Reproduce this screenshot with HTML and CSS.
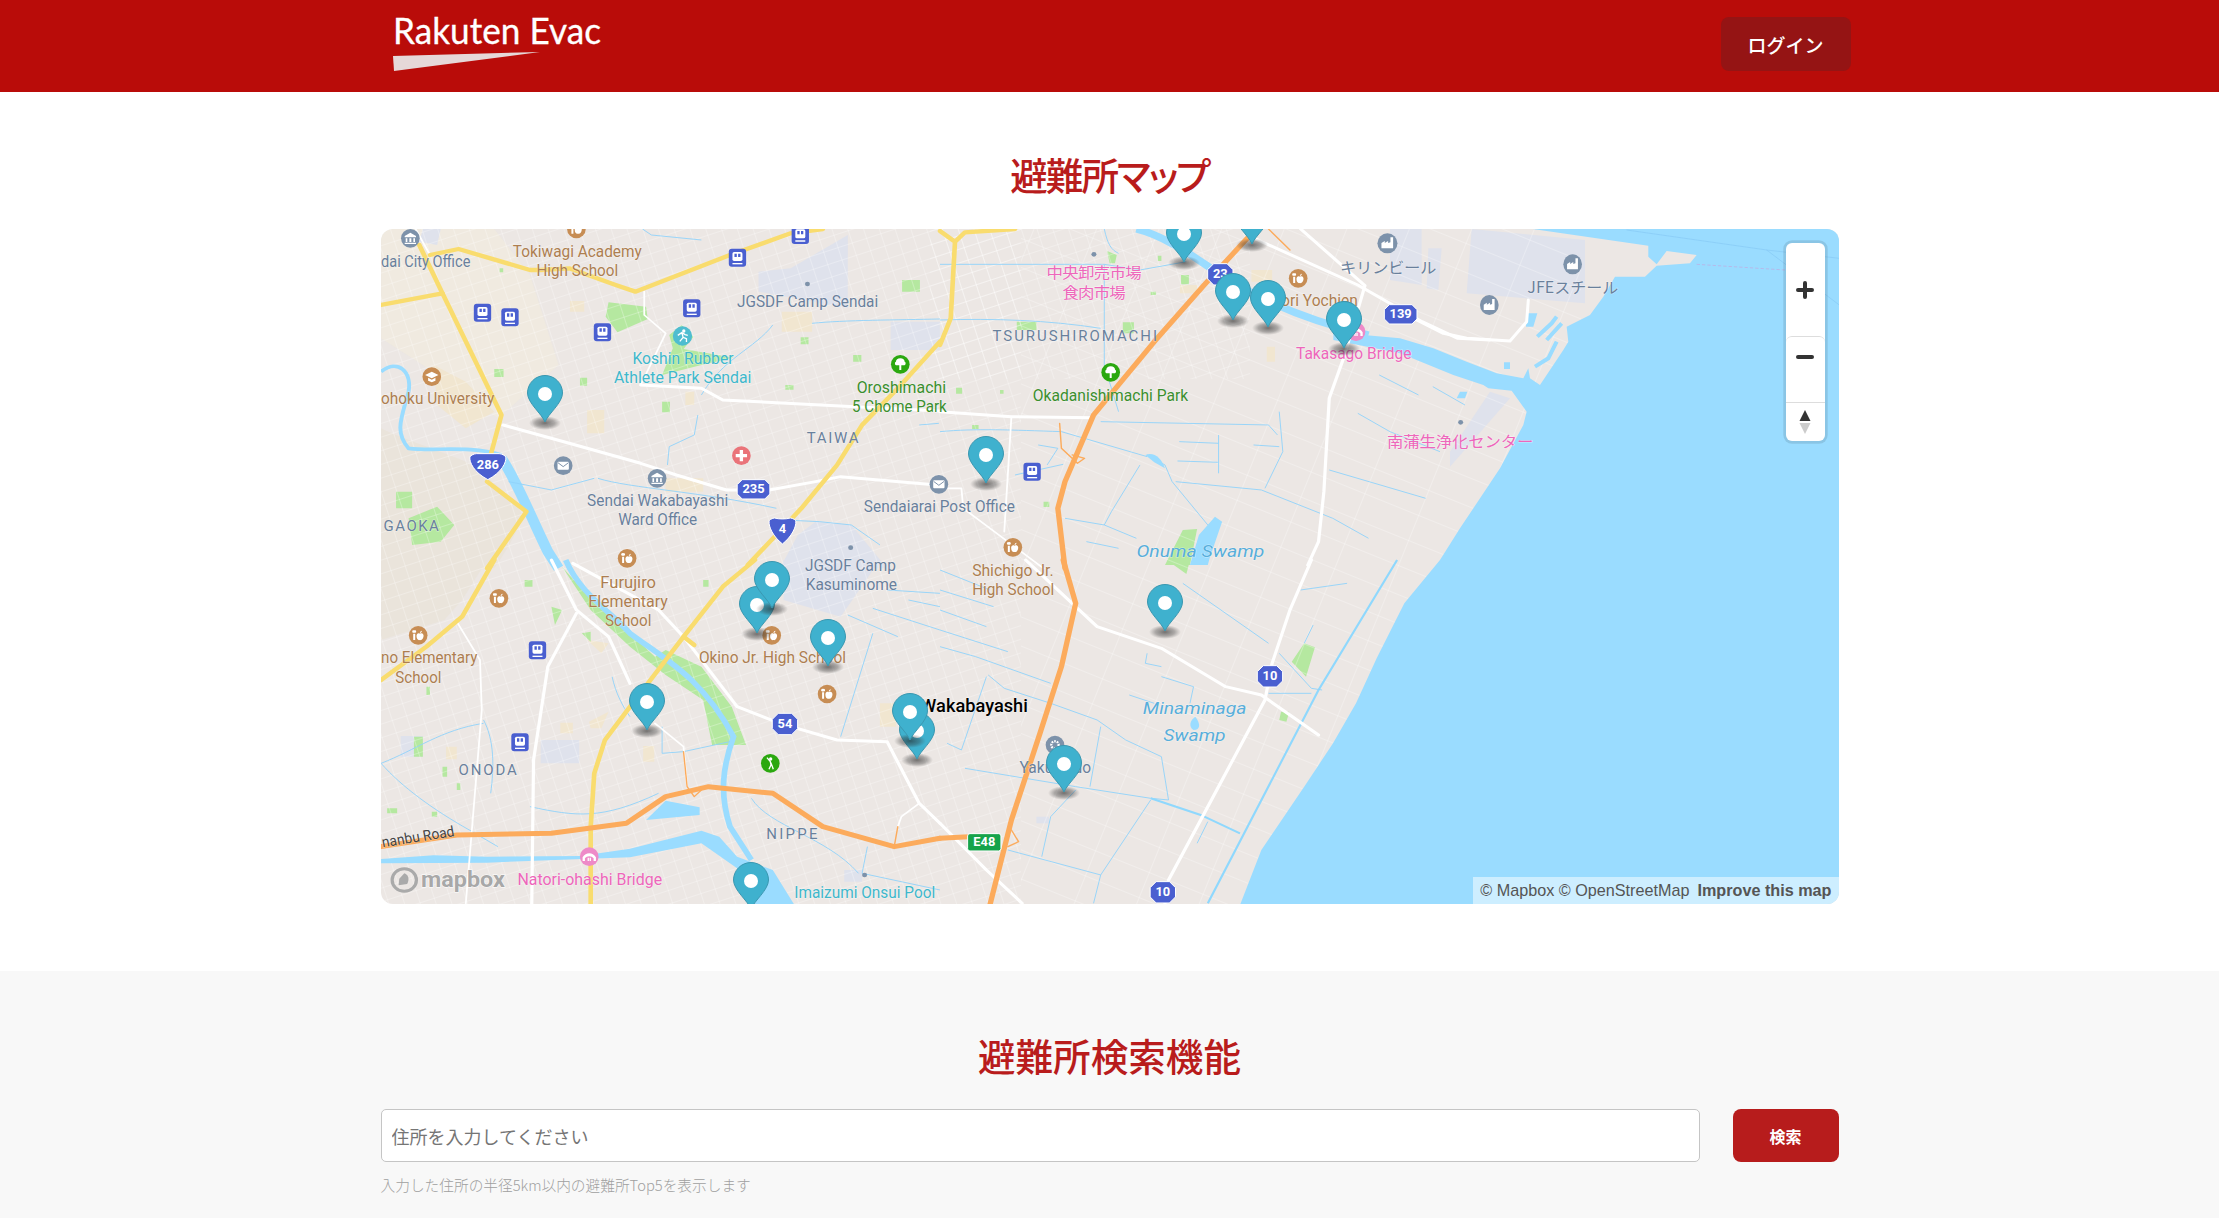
FILE: index.html
```html
<!DOCTYPE html>
<html lang="ja">
<head>
    <meta charset="UTF-8">
    <meta name="viewport" content="width=device-width, initial-scale=1.0">
    <title>Rakuten Evac</title>
    <link rel="stylesheet" href="styles.css">
</head>
<body>
    <header class="site-header">
        <div class="header-inner">
            <svg class="logo" viewBox="0 0 240 76" width="240" height="76">
                <text class="logo-text" x="0" y="36" textLength="208" lengthAdjust="spacingAndGlyphs">Rakuten Evac</text>
                <polygon class="logo-swoosh" points="0,48 147,44 1,63"/>
            </svg>
            <button class="login-btn">ログイン</button>
        </div>
    </header>

    <section class="map-section">
        <div class="container">
            <h2 class="section-title title-map">避難所マップ</h2>
            <div class="map-box">
                <svg class="map" viewBox="381 229 1458 675" width="1458" height="675">
                    <defs>
                        <pattern id="streets-dense" width="15" height="13" patternUnits="userSpaceOnUse" patternTransform="rotate(-18)">
                            <path d="M0 0H15M0 0V13" class="street-fine"/>
                        </pattern>
                        <pattern id="streets-wide" width="58" height="27" patternUnits="userSpaceOnUse" patternTransform="rotate(22)">
                            <path d="M0 0H58M0 0V27" class="street-fine"/>
                        </pattern>
                        <radialGradient id="pin-shadow">
                            <stop offset="0" stop-color="#222" stop-opacity=".6"/>
                            <stop offset=".6" stop-color="#333" stop-opacity=".35"/>
                            <stop offset="1" stop-color="#444" stop-opacity="0"/>
                        </radialGradient>

                        <!-- pin: tip is at 0,0 -->
                        <g id="pin">
                            <ellipse cx="0" cy="1" rx="16" ry="7" fill="url(#pin-shadow)"/>
                            <path d="M0 0C-3-8-17.5-19-17.5-29A17.5 17.5 0 0 1 17.5-29C17.5-19 3-8 0 0Z" class="pin-body"/>
                            <circle cx="0" cy="-28" r="7" fill="#fff"/>
                        </g>

                        <!-- poi icons, drawn around 0,0 and squeezed back to round -->
                        <g id="i-rail" transform="scale(.933 1)">
                            <rect x="-26" y="-27" width="52" height="54" rx="9" fill="#4a5fd0"/>
                            <rect x="-15" y="-17" width="30" height="27" rx="5" fill="#fff"/>
                            <path d="M-9-12H-2V-2H-9ZM2-12H9V-2H2Z" fill="#4a5fd0"/>
                            <path d="M-15 18H15" stroke="#fff" stroke-width="4"/>
                        </g>
                        <g id="i-museum" transform="scale(.933 1)">
                            <circle r="28" class="poi-slate"/>
                            <path d="M0-17L17-7V-3H-17V-7ZM-14 0H-9V11H-14ZM-3 0H3V11H-3ZM9 0H14V11H9ZM-17 13H17V17H-17Z" fill="#fff"/>
                        </g>
                        <g id="i-mail" transform="scale(.933 1)">
                            <circle r="28" class="poi-slate"/>
                            <rect x="-17" y="-12" width="34" height="24" rx="3" fill="#fff"/>
                            <path d="M-16-9L0 3L16-9" fill="none" stroke="#7d92aa" stroke-width="3"/>
                        </g>
                        <g id="i-factory" transform="scale(.933 1)">
                            <circle r="30" class="poi-slate"/>
                            <path d="M-18 15V-1L-8-7V-1L2-7V-1L9-3V-18H17V15Z" fill="#fff"/>
                        </g>
                        <g id="i-gear" transform="scale(.933 1)">
                            <circle r="28" class="poi-slate"/>
                            <circle r="11" fill="none" stroke="#fff" stroke-width="7" stroke-dasharray="5 3"/>
                        </g>
                        <g id="i-school" transform="scale(.933 1)">
                            <circle r="28" fill="#c78d54"/>
                            <path d="M0-15L20-5L0 5L-20-5ZM-11 3L0 9L11 3V12L0 17L-11 12Z" fill="#fff"/>
                        </g>
                        <g id="i-apple" transform="scale(.933 1)">
                            <circle r="28" fill="#c78d54"/>
                            <path d="M-15-5H-9V14H-15ZM-12-15A4 4 0 1 1-12-8A4 4 0 1 1-12-15Z" fill="#fff"/>
                            <path d="M5-5C12-9 17-4 16 3C15 11 10 16 5 14C0 16-5 11-5 3C-6-4 0-9 5-5ZM5-7C5-11 8-14 11-14C11-11 9-8 5-7Z" fill="#fff"/>
                        </g>
                        <g id="i-run" transform="scale(.933 1)">
                            <circle r="29" fill="#4fbdd0"/>
                            <circle cx="4" cy="-15" r="5" fill="#fff"/>
                            <path d="M-14-2L-2-10L8-4L16-2M-2-10L2 4L-8 16M2 4L12 8L12 18" fill="none" stroke="#fff" stroke-width="4"/>
                        </g>
                        <g id="i-tree" transform="scale(.933 1)">
                            <circle r="28" fill="#2ba80f"/>
                            <path d="M0-18C8-18 13-13 13-8C18-6 17 3 10 3H3V17H-3V3H-10C-17 3-18-6-13-8C-13-13-8-18 0-18Z" fill="#fff"/>
                        </g>
                        <g id="i-hospital" transform="scale(.933 1)">
                            <circle r="28" fill="#ea7379"/>
                            <path d="M-5-17H5V-5H17V5H5V17H-5V5H-17V-5H-5Z" fill="#fff"/>
                        </g>
                        <g id="i-bridge" transform="scale(.933 1)">
                            <circle r="28" fill="#ee8ac8"/>
                            <path d="M-20 2C-10-14 10-14 20 2V13H13V5C7-3-7-3-13 5V13H-20ZM-5 3H-1V13H-5ZM1 3H5V13H1Z" fill="#fff"/>
                        </g>
                        <g id="i-golf" transform="scale(.933 1)">
                            <circle r="28" fill="#2ba80f"/>
                            <circle cx="1" cy="-13" r="5" fill="#fff"/>
                            <path d="M-10-17L0-5L2 5L-4 18M0-5L4 4L9 18" fill="none" stroke="#fff" stroke-width="4"/>
                        </g>
                        <circle id="i-dot" r="7" fill="#7d92aa"/>

                        <!-- road shields -->
                        <path id="s-oct" transform="scale(.933 1)" d="M-20-32H20L38-14V14L20 32H-20L-38 14V-14Z" class="shield"/>
                        <path id="s-wide" transform="scale(.933 1)" d="M-34-29H34L49-14V14L34 29H-34L-49 14V-14Z" class="shield"/>
                        <path id="s-nat" transform="scale(.933 1)" d="M-34-36H34C42-36 52-30 54-26C56-10 42 20 0 42C-42 20-56-10-54-26C-52-30-42-36-34-36Z" class="shield"/>
                        <path id="s-nat-sm" transform="scale(.933 1)" d="M-24-36C-10-32 10-32 24-36C34-34 40-30 40-26C42-10 28 20 0 42C-28 20-42-10-40-26C-40-30-34-34-24-36Z" class="shield"/>
                    </defs>

                    <rect x="381" y="229" width="1458" height="675" class="land"/>

                    <!-- city tint, hills, camps, parks (z3 coords) -->
                    <g transform="translate(380 225) scale(.3571 .3333)">
                        <path d="M3 12H320L420 150L500 420L330 580L120 420L3 340Z" class="tint"/>
                        <path d="M3 610C60 640 150 670 240 710C320 770 390 830 400 880C370 950 340 1000 320 1030H3Z" class="hill"/>
                        <path d="M1060 140L1150 130L1310 30V250L1060 200Z" class="camp"/>
                        <path d="M1430 290H1568V375H1430Z" class="camp"/>
                        <path d="M1220 890L1320 900L1420 1030H1120L1170 930Z" class="camp"/>
                        <path d="M120 12L170 12L160 60L110 50Z" class="camp"/>
                        <path d="M150 420L240 470L320 560L240 610L160 540Z" class="sand"/>
                        <path d="M580 555H628V625H580ZM532 228H572V260H532ZM1125 260H1210V320H1125ZM800 760H905V800H800ZM855 500H880V540H855Z" class="sand"/>
                        <path d="M640 232L745 245L750 282L665 322L632 275Z" class="park"/>
                        <path d="M845 300L878 335L850 372L990 398L900 420L790 450L820 370L810 330Z" class="park"/>
                        <path d="M80 880L160 845L208 900L170 950L90 960Z" class="park"/>
                        <path d="M1462 165H1512V200H1462ZM320 432H346V456H320ZM560 458H580V482H560ZM790 530H812V562H790ZM1178 337H1200V358H1178ZM1325 390H1348V410H1325ZM1135 480H1158V494H1135ZM45 800H90V850H45ZM335 130H345V142H335Z" class="park"/>
                    </g>
                    <!-- z4 coords -->
                    <g transform="translate(940 225) scale(.3571 .3333)">
                        <path d="M872 135H930V170H872ZM915 365H938V410H915ZM672 180H720V205H672Z" class="sand"/>
                        <path d="M468 78L495 90L490 115L475 115ZM215 290H270V315H215ZM512 292H543V325H512ZM675 150H697V178H675ZM45 488H62V506H45ZM168 495H178V506H168ZM90 600H108V612H90ZM290 830H306V846H290ZM610 92H620V108H610ZM590 200H605V210H590Z" class="park"/>
                        <path d="M680 915L720 912L700 1020H630Z" class="park"/>
                    </g>
                    <!-- z5 coords -->
                    <g transform="translate(1400 225) scale(.3333)">
                        <path d="M215 12L555 45V235L200 205ZM-30 12H65V180L-30 165ZM85 70H125L115 195L80 190Z" class="camp"/>
                        <path d="M270 500L330 520L150 725L150 680Z" class="camp"/>
                    </g>
                    <!-- z6 coords -->
                    <g transform="translate(380 560) scale(.3571 .3333)">
                        <path d="M3 0H300L230 120L180 180L3 240Z" class="hill"/>
                        <path d="M1130 0H1400L1290 170L1130 120Z" class="camp"/>
                        <path d="M58 528H120V590H58ZM450 540H558V610H450ZM1300 930H1350V965H1300Z" class="camp"/>
                        <path d="M585 485L640 455L620 505H590ZM505 488H540V520H505ZM737 558H768V605H737ZM185 560H215V598H185ZM580 240L640 250L620 280ZM1400 430H1445V500H1400Z" class="sand"/>
                        <path d="M510 20L600 130L700 220L770 290L800 270L900 320L985 440L1025 555H930L905 420L800 345L700 260L590 150Z" class="park"/>
                        <path d="M95 530H120V590H95ZM480 140L510 150L490 195ZM405 60H427V80H405ZM565 220L590 215L590 245ZM175 620H188V650H175ZM130 380H140V405H130ZM20 745H48V760H20ZM215 670H225V690H215ZM145 755H160V770H145ZM905 60H920V80H905Z" class="park"/>
                    </g>
                    <!-- z7 coords -->
                    <g transform="translate(940 560) scale(.3571 .3333)">
                        <path d="M635 0H700L690 42Z" class="park"/>
                        <path d="M1020 250L1050 262L1025 350L985 305ZM955 455H978L970 485L950 480Z" class="park"/>
                        <path d="M270 770H305V790H270Z" class="camp"/>
                    </g>

                    <!-- small streets -->
                    <rect x="381" y="229" width="640" height="675" fill="url(#streets-dense)"/>
                    <rect x="1021" y="229" width="560" height="675" fill="url(#streets-wide)"/>
                    <rect x="930" y="229" width="320" height="150" fill="url(#streets-dense)"/>

                    <!-- sea and the river mouth (z5 coords) -->
                    <g transform="translate(1400 225) scale(.3333)">
                        <path d="M315 0L745 62V95L770 118L800 78L890 90L870 115L770 122L735 155L645 155L610 215L570 270L500 305L505 350L490 375L440 450L420 480L390 460L385 430L370 460L290 445L200 410L100 370L0 340L-200 322L-200 345L0 385L160 450L250 480L265 490L335 497L380 560L370 600L300 730L180 910L120 1005L13 1135L-70 1300L-132 1435L-201 1555L-287 1685L-416 1875L-480 2040H1340V0Z" class="water"/>
                        <path d="M412 335L455 295L470 275M440 345L485 295M470 350L445 400L405 425" class="lagoon"/>
                        <path d="M380 265H412L400 305H378ZM312 412H330V432H312ZM180 500H202L195 520H170Z" class="water"/>
                        <path d="M680 15L1100 75L1318 100M1100 75L1318 240" class="canal-sea"/>
                        <path d="M890 118L1155 135" class="ferry"/>
                    </g>

                    <!-- rivers, canals (z4) -->
                    <g transform="translate(940 225) scale(.3571 .3333)">
                        <path d="M550 12C620 30 690 80 745 120C850 200 1000 280 1200 330" class="river-lg"/>
                        <path d="M0 118H460L560 135L690 110" class="canal"/>
                        <path d="M460 12C470 60 480 75 500 85M460 118V420L500 560" class="canal"/>
                        <path d="M0 285C150 280 300 285 450 310M0 620C100 610 200 615 340 620L580 695M450 590L920 600L945 630" class="canal"/>
                        <path d="M670 650L780 655M665 708L778 712M878 660L950 665M780 630V745" class="canal"/>
                        <path d="M580 690L630 720L650 770L750 900M560 720L480 860L460 900M350 880L460 900L550 940M410 950L500 970M660 770L900 795L1100 880L1200 940" class="canal"/>
                        <path d="M950 560L960 680L910 790M1090 735L1360 820M1170 565L1260 620L1400 680M1230 450L1340 510M1380 485L1470 540" class="canal"/>
                        <path d="M275 660L330 670L300 720M210 750L345 718" class="canal"/>
                        <path d="M575 690C600 680 620 700 630 730L600 712Z" class="water"/>
                        <path d="M770 875L790 890L755 1000L750 1020H700L725 930Z" class="water"/>
                    </g>
                    <!-- z3 canals, river -->
                    <g transform="translate(380 225) scale(.3571 .3333)">
                        <path d="M3 440C50 400 90 440 80 500C60 580 40 620 80 670C150 680 250 660 340 690" class="river-sm"/>
                        <path d="M340 700C380 760 420 870 470 980L500 1030" class="river-md"/>
                        <path d="M1210 295C1300 285 1450 285 1568 282M890 570L880 630L810 665L805 720M610 760C700 790 900 800 1110 850M360 770L480 795L600 760M1130 885L1230 890L1320 900L1400 960M1565 595L1510 600" class="canal"/>
                        <path d="M735 12L760 30L900 45M1100 300C1050 370 960 400 900 510" class="canal"/>
                    </g>
                    <!-- z6 rivers -->
                    <g transform="translate(380 560) scale(.3571 .3333)">
                        <path d="M520 0C560 100 640 150 700 220C800 300 900 350 990 530C960 620 950 700 980 800L1040 900" class="river"/>
                        <path d="M3 897L150 886L300 890L560 888L700 866L900 812L950 830L1000 890L1100 930L1160 1034H1035L1000 925L900 850L700 892L300 908L3 910Z" class="water"/>
                        <path d="M745 780L800 722L895 742V765Z" class="water"/>
                        <path d="M3 610C60 680 150 750 250 810L330 860M650 350C660 400 680 440 700 470M790 500V580L850 575L980 545M290 480C320 540 320 620 310 700M3 610C100 570 170 510 290 490M420 740C550 770 620 780 780 700M1380 220L1290 530M1480 120L1568 140M1380 145L1568 210M1420 90L1568 100M1310 165L1450 230M1365 860L1350 940L1568 990M1040 715C1090 800 1250 830 1340 940" class="canal"/>
                    </g>
                    <!-- z7 canals -->
                    <g transform="translate(940 560) scale(.3571 .3333)">
                        <path d="M1280 0L1060 390L750 1030" class="canal-lg"/>
                        <path d="M680 70L920 250M950 280L1040 385L1070 390M920 400H1040M1045 195L1020 250M1140 70L1010 90" class="canal"/>
                        <path d="M0 30L140 90M0 90L150 140M0 150L130 200M0 210L190 275M0 260L100 290L310 370M135 345L180 385L310 430L440 480L520 540L620 590L640 720L590 715L380 680L70 625M20 550L60 570L130 350" class="canal"/>
                        <path d="M450 500L420 680M380 690L310 770L285 890M190 870L450 945L430 1030M590 720L450 945" class="canal"/>
                        <path d="M590 715L730 765L840 820" class="canal-lg"/>
                        <path d="M750 785L720 850M620 350L710 380L700 430M580 280L575 310L620 320M530 405L600 430" class="canal"/>
                        <path d="M715 470C730 490 730 510 710 510C695 500 700 480 715 470Z" class="water"/>
                    </g>

                    <!-- roads: white -->
                    <g transform="translate(380 225) scale(.3571 .3333)" class="road-w">
                        <path d="M345 600L530 655L730 715L830 750L970 795H1090L1220 770L1290 755L1560 780"/>
                        <path class="thin" d="M740 200V270L800 325L730 480"/>
                        <path d="M730 480L900 490L960 525L1330 545L1568 558"/>
                        <path class="thin" d="M100 12L140 90"/>
                    </g>
                    <g transform="translate(940 225) scale(.3571 .3333)" class="road-w">
                        <path d="M0 560L200 575L430 578"/>
                        <path class="thin" d="M200 575L180 920M0 790H60L65 850L290 1030"/>
                        <path d="M1010 12L1190 182L1130 400L1090 520L1075 800L1060 950L1030 1020"/>
                        <path d="M880 40L1170 180L1350 290L1450 340L1540 345"/>
                    </g>
                    <g transform="translate(1400 225) scale(.3333)" class="road-w">
                        <path d="M50 285L130 325L200 340L330 348L380 290L385 225"/>
                    </g>
                    <g transform="translate(940 560) scale(.3571 .3333)" class="road-w">
                        <path d="M1040 0L980 150L930 310L910 420L760 720L640 960L630 1030"/>
                        <path d="M240 0L440 200L620 265L800 380L900 405L1000 480L1060 525"/>
                        <path d="M0 790L130 930L230 1030"/>
                    </g>
                    <g transform="translate(380 560) scale(.3571 .3333)" class="road-w">
                        <path d="M1000 440L1120 490L1280 540L1420 545L1510 730L1568 790"/>
                        <path d="M480 0L550 150L640 230L700 370"/>
                        <path d="M550 160L470 320L430 600L425 1034"/>
                        <path class="thin" d="M215 185L280 300L285 450L240 1034"/>
                        <path d="M540 10L780 150L850 230L1000 440"/>
                        <path class="thin" d="M770 490L850 560L860 680"/>
                        <path class="thin" d="M1510 730L1460 770L1450 800"/>
                    </g>

                    <!-- roads: yellow -->
                    <g transform="translate(380 225) scale(.3571 .3333)" class="road-y">
                        <path d="M3 240L175 205L340 570L310 690"/>
                        <path d="M175 205L110 60M140 90L220 72L420 135H450L530 130L660 180L715 200L980 90L1150 25L1240 12"/>
                        <path d="M300 770L410 860L300 1030"/>
                        <path d="M1030 1020L1180 850L1280 720L1350 600L1450 490L1568 350"/>
                    </g>
                    <g transform="translate(940 225) scale(.3571 .3333)" class="road-y">
                        <path d="M0 360L30 280L42 50L0 18M42 50L70 22L210 12"/>
                    </g>
                    <g transform="translate(380 560) scale(.3571 .3333)" class="road-y">
                        <path d="M320 0L230 170L130 260L3 360"/>
                        <path d="M590 1034V800L600 640L630 540L700 440L850 230L960 80L1050 0"/>
                        <path d="M850 230L880 255"/>
                    </g>

                    <!-- roads: expressway -->
                    <g transform="translate(940 225) scale(.3571 .3333)" class="road-o">
                        <path d="M860 40L740 180L600 350L430 570L350 770L330 850L350 1030"/>
                    </g>
                    <g transform="translate(940 225) scale(.3571 .3333)" class="road-ot">
                        <path d="M335 595L340 670L385 715L405 700L370 690M920 12L980 75"/>
                    </g>
                    <g transform="translate(940 560) scale(.3571 .3333)" class="road-o">
                        <path d="M345 0L380 130L340 320L280 520L200 780L140 1034"/>
                        <path d="M0 835L80 830"/>
                    </g>
                    <g transform="translate(940 560) scale(.3571 .3333)" class="road-ot">
                        <path d="M200 810L220 845L190 860"/>
                    </g>
                    <g transform="translate(380 560) scale(.3571 .3333)" class="road-o">
                        <path d="M3 860L215 825L480 820L690 790L800 710L920 680L1100 700L1240 800L1440 860L1568 835"/>
                    </g>
                    <g transform="translate(380 560) scale(.3571 .3333)" class="road-ot">
                        <path d="M850 575L860 680L880 710L900 690M1450 800L1440 860"/>
                    </g>

                    <!-- pois, shields and labels: z3 -->
                    <g transform="translate(380 225) scale(.3571 .3333)">
                        <use href="#i-museum" x="85" y="40"/>
                        <use href="#i-museum" x="776" y="760"/>
                        <use href="#i-mail" x="513" y="722"/>
                        <use href="#i-mail" x="1565" y="778"/>
                        <use href="#i-school" x="145" y="455"/>
                        <use href="#i-apple" x="550" y="12"/>
                        <use href="#i-apple" x="692" y="1000"/>
                        <use href="#i-rail" x="287" y="263"/>
                        <use href="#i-rail" x="364" y="277"/>
                        <use href="#i-rail" x="623" y="322"/>
                        <use href="#i-rail" x="873" y="250"/>
                        <use href="#i-rail" x="1001" y="98"/>
                        <use href="#i-rail" x="1177" y="30"/>
                        <use href="#i-run" x="847" y="333"/>
                        <use href="#i-tree" x="1457" y="418"/>
                        <use href="#i-hospital" x="1012" y="692"/>
                        <use href="#i-dot" x="1197" y="177"/>
                        <use href="#i-dot" x="1318" y="968"/>

                        <use href="#s-nat" x="302" y="722"/>
                        <text class="shield-t" x="302" y="732">286</text>
                        <use href="#s-wide" x="1046" y="793"/>
                        <text class="shield-t" x="1046" y="805">235</text>
                        <use href="#s-nat-sm" x="1127" y="915"/>
                        <text class="shield-t" x="1127" y="925">4</text>

                        <text class="lbl slate" x="3" y="125" textLength="250" lengthAdjust="spacingAndGlyphs">dai City Office</text>
                        <text class="lbl brown" x="372" y="95" textLength="361" lengthAdjust="spacingAndGlyphs">Tokiwagi Academy</text>
                        <text class="lbl brown" x="438" y="153" textLength="229" lengthAdjust="spacingAndGlyphs">High School</text>
                        <text class="lbl slate" x="1000" y="245" textLength="395" lengthAdjust="spacingAndGlyphs">JGSDF Camp Sendai</text>
                        <text class="lbl teal" x="707" y="417" textLength="283" lengthAdjust="spacingAndGlyphs">Koshin Rubber</text>
                        <text class="lbl teal" x="655" y="475" textLength="385" lengthAdjust="spacingAndGlyphs">Athlete Park Sendai</text>
                        <text class="lbl green" x="1335" y="503" textLength="250" lengthAdjust="spacingAndGlyphs">Oroshimachi</text>
                        <text class="lbl green" x="1322" y="561" textLength="265" lengthAdjust="spacingAndGlyphs">5 Chome Park</text>
                        <text class="lbl brown" x="3" y="538" textLength="317" lengthAdjust="spacingAndGlyphs">ohoku University</text>
                        <text class="lbl slate spaced" x="1195" y="655" textLength="145">TAIWA</text>
                        <text class="lbl slate" x="580" y="843" textLength="395" lengthAdjust="spacingAndGlyphs">Sendai Wakabayashi</text>
                        <text class="lbl slate" x="667" y="901" textLength="221" lengthAdjust="spacingAndGlyphs">Ward Office</text>
                        <text class="lbl slate" x="1355" y="862" textLength="423" lengthAdjust="spacingAndGlyphs">Sendaiarai Post Office</text>
                        <text class="lbl slate spaced" x="10" y="917" textLength="155">GAOKA</text>
                    </g>

                    <!-- z4 -->
                    <g transform="translate(940 225) scale(.3571 .3333)">
                        <use href="#i-apple" x="1003" y="160"/>
                        <use href="#i-apple" x="204" y="967"/>
                        <use href="#i-factory" x="1253" y="55"/>
                        <use href="#i-rail" x="258" y="740"/>
                        <use href="#i-tree" x="478" y="442"/>
                        <use href="#i-bridge" x="1165" y="320"/>
                        <use href="#i-dot" x="431" y="88"/>
                        <use href="#i-dot" x="1458" y="592"/>
                        <use href="#s-oct" x="785" y="148"/>
                        <text class="shield-t" x="785" y="160">23</text>
                        <use href="#s-wide" x="1290" y="268"/>
                        <text class="shield-t" x="1290" y="280">139</text>

                        <text class="lbl pink cjk" x="298" y="158" textLength="267">中央卸売市場</text>
                        <text class="lbl pink cjk" x="343" y="218" textLength="177">食肉市場</text>
                        <text class="lbl slate spaced" x="147" y="347" textLength="461">TSURUSHIROMACHI</text>
                        <text class="lbl green" x="260" y="527" textLength="435" lengthAdjust="spacingAndGlyphs">Okadanishimachi Park</text>
                        <text class="lbl brown" x="955" y="243" textLength="215" lengthAdjust="spacingAndGlyphs">ori Yochien</text>
                        <text class="lbl pink" x="997" y="402" textLength="323" lengthAdjust="spacingAndGlyphs">Takasago Bridge</text>
                        <text class="lbl slate cjk" x="1120" y="143" textLength="270">キリンビール</text>
                        <text class="lbl water-t" x="550" y="995" textLength="358" lengthAdjust="spacingAndGlyphs">Onuma Swamp</text>
                        <text class="lbl pink cjk" x="1252" y="665" textLength="410">南蒲生浄化センター</text>
                    </g>

                    <!-- z5 -->
                    <g transform="translate(1400 225) scale(.3333)">
                        <use href="#i-factory" x="518" y="118"/>
                        <use href="#i-factory" x="268" y="240"/>
                        <text class="lbl slate cjk" x="382" y="205" textLength="273" lengthAdjust="spacingAndGlyphs">JFEスチール</text>
                    </g>

                    <!-- z6 -->
                    <g transform="translate(380 560) scale(.3571 .3333)">
                        <use href="#i-apple" x="333" y="115"/>
                        <use href="#i-apple" x="107" y="226"/>
                        <use href="#i-apple" x="1097" y="226"/>
                        <use href="#i-apple" x="1252" y="402"/>
                        <use href="#i-rail" x="441" y="271"/>
                        <use href="#i-rail" x="392" y="547"/>
                        <use href="#i-bridge" x="586" y="890"/>
                        <use href="#i-golf" x="1093" y="610"/>
                        <use href="#i-dot" x="1357" y="945"/>
                        <use href="#s-oct" x="1134" y="492"/>
                        <text class="shield-t" x="1134" y="504">54</text>

                        <text class="lbl slate" x="1190" y="32" textLength="255" lengthAdjust="spacingAndGlyphs">JGSDF Camp</text>
                        <text class="lbl slate" x="1192" y="90" textLength="256" lengthAdjust="spacingAndGlyphs">Kasuminome</text>
                        <text class="lbl brown" x="617" y="83" textLength="156" lengthAdjust="spacingAndGlyphs">Furujiro</text>
                        <text class="lbl brown" x="583" y="141" textLength="223" lengthAdjust="spacingAndGlyphs">Elementary</text>
                        <text class="lbl brown" x="630" y="199" textLength="130" lengthAdjust="spacingAndGlyphs">School</text>
                        <text class="lbl brown" x="3" y="310" textLength="270" lengthAdjust="spacingAndGlyphs">no Elementary</text>
                        <text class="lbl brown" x="43" y="368" textLength="129" lengthAdjust="spacingAndGlyphs">School</text>
                        <text class="lbl brown" x="893" y="310" textLength="412" lengthAdjust="spacingAndGlyphs">Okino Jr. High School</text>
                        <text class="lbl slate spaced" x="220" y="646" textLength="163">ONODA</text>
                        <text class="lbl slate spaced" x="1082" y="837" textLength="143">NIPPE</text>
                        <text class="lbl road-t" x="8" y="862" textLength="205" lengthAdjust="spacingAndGlyphs" transform="rotate(-9.5 8 862)">nanbu Road</text>
                        <text class="lbl pink" x="385" y="975" textLength="405" lengthAdjust="spacingAndGlyphs">Natori-ohashi Bridge</text>
                        <text class="lbl teal" x="1160" y="1013" textLength="395" lengthAdjust="spacingAndGlyphs">Imaizumi Onsui Pool</text>

                        <!-- mapbox mark -->
                        <circle cx="68" cy="960" r="34" class="mb-ring"/>
                        <path d="M68 940C82 946 82 960 76 972L52 976L54 956Z" class="mb-inner"/>
                        <text class="mb-text" x="115" y="980" textLength="235" lengthAdjust="spacingAndGlyphs">mapbox</text>
                    </g>

                    <!-- z7 -->
                    <g transform="translate(940 560) scale(.3571 .3333)">
                        <use href="#i-gear" x="322" y="555"/>
                        <use href="#s-oct" x="924" y="349"/>
                        <text class="shield-t" x="924" y="361">10</text>
                        <use href="#s-oct" x="624" y="997"/>
                        <text class="shield-t" x="624" y="1009">10</text>
                        <g transform="translate(124 847) scale(.933 1)">
                            <rect x="-50" y="-26" width="100" height="52" rx="7" class="shield-g"/>
                        </g>
                        <text class="shield-t" x="124" y="859">E48</text>

                        <text class="lbl brown" x="90" y="47" textLength="228" lengthAdjust="spacingAndGlyphs">Shichigo Jr.</text>
                        <text class="lbl brown" x="90" y="105" textLength="230" lengthAdjust="spacingAndGlyphs">High School</text>
                        <text class="lbl place" x="-55" y="455" textLength="301" lengthAdjust="spacingAndGlyphs">Wakabayashi</text>
                        <text class="lbl slate" x="223" y="640" textLength="200" lengthAdjust="spacingAndGlyphs">Yakushido</text>
                        <text class="lbl water-t" x="568" y="463" textLength="290" lengthAdjust="spacingAndGlyphs">Minaminaga</text>
                        <text class="lbl water-t" x="625" y="542" textLength="175" lengthAdjust="spacingAndGlyphs">Swamp</text>
                    </g>

                    <!-- shelter pins -->
                    <use href="#pin" x="545" y="422"/>
                    <use href="#pin" x="1184" y="262"/>
                    <use href="#pin" x="1252" y="244"/>
                    <use href="#pin" x="1233" y="320"/>
                    <use href="#pin" x="1268" y="327"/>
                    <use href="#pin" x="1344" y="348"/>
                    <use href="#pin" x="986" y="483"/>
                    <use href="#pin" x="757" y="633"/>
                    <use href="#pin" x="772" y="608"/>
                    <use href="#pin" x="828" y="666"/>
                    <use href="#pin" x="647" y="730"/>
                    <use href="#pin" x="917" y="759"/>
                    <use href="#pin" x="910" y="740"/>
                    <use href="#pin" x="751" y="909"/>
                    <use href="#pin" x="1165" y="631"/>
                    <use href="#pin" x="1064" y="792"/>
                </svg>

                <div class="map-ctrl">
                    <button class="ctrl-btn ctrl-in" aria-label="Zoom in">
                        <svg viewBox="0 0 18 18" width="18" height="18"><path d="M9 2V16M2 9H16" class="ctrl-stroke"/></svg>
                    </button>
                    <button class="ctrl-btn ctrl-out" aria-label="Zoom out">
                        <svg viewBox="0 0 18 18" width="18" height="18"><path d="M2 9H16" class="ctrl-stroke"/></svg>
                    </button>
                    <button class="ctrl-btn ctrl-compass" aria-label="Reset north">
                        <svg viewBox="0 0 12 24" width="12" height="24"><path d="M6 0L11.5 11H.5Z" fill="#333"/><path d="M6 24L.5 13H11.5Z" fill="#ccc"/></svg>
                    </button>
                </div>
                <div class="map-attrib">
                    <span>© Mapbox © OpenStreetMap</span>
                    <b>Improve this map</b>
                </div>
            </div>
        </div>
    </section>

    <section class="search-section">
        <div class="container">
            <h2 class="section-title">避難所検索機能</h2>
            <form class="search-form">
                <input class="search-input" type="text" placeholder="住所を入力してください">
                <button class="search-btn" type="button">検索</button>
            </form>
            <p class="search-hint">入力した住所の半径5km以内の避難所Top5を表示します</p>
        </div>
    </section>
</body>
</html>
```

FILE: styles.css
```css
* {
    box-sizing: border-box;
}
body {
    margin: 0;
    background-color: #fff;
    font-family: "Noto Sans CJK JP", "Noto Sans", sans-serif;
}
.container {
    width: 1458px;
    margin: 0 auto;
}

/* Header */
.site-header {
    height: 92px;
    background-color: #b90c09;
}
.header-inner {
    width: 1482px;
    height: 92px;
    margin: 0 auto;
    padding-left: 24px;
    display: flex;
    align-items: center;
    justify-content: space-between;
}
.logo {
    display: block;
}
.logo-text {
    font-family: Lato, sans-serif;
    font-size: 36px;
    fill: #fff;
    stroke: #fff;
    stroke-width: .3px;
}
.logo-swoosh {
    fill: #e6d8d8;
}
.login-btn {
    width: 130px;
    height: 54px;
    margin-bottom: 4px;
    border: none;
    border-radius: 8px;
    background-color: #951414;
    color: #fff;
    font-family: inherit;
    font-size: 19px;
    font-weight: 500;
}

/* Sections */
.map-section {
    padding: 59px 0 67px;
}
.search-section {
    height: 247px;
    padding-top: 61px;
    background-color: #f8f8f8;
}
.section-title {
    margin: 0 0 32px;
    height: 46px;
    line-height: 46px;
    text-align: center;
    color: #b91c1c;
    font-size: 37.6px;
    font-weight: 500;
    font-feature-settings: "palt";
}
.title-map {
    letter-spacing: -2px;
}
.search-section .section-title {
    margin-bottom: 31px;
}

/* Map */
.map-box {
    position: relative;
    height: 675px;
    border-radius: 12px;
    overflow: hidden;
}
.map {
    display: block;
}
.land { fill: #ece7e4; }
.tint { fill: #f4eedb; opacity: .5; }
.hill { fill: #eae4db; }
.camp { fill: #dfe2ec; }
.sand { fill: #f1e6d0; }
.park { fill: #b5e8a0; }
.water { fill: #9adcff; }
.street-fine { fill: none; stroke: #fff; stroke-width: .8; opacity: .7; }
.canal, .canal-lg, .canal-sea, .ferry, .river, .river-sm, .river-md, .river-lg, .lagoon { fill: none; }
.canal { stroke: #8fd2fb; stroke-width: 2.6; }
.canal-lg { stroke: #8fd8fd; stroke-width: 6; }
.canal-sea { stroke: #86c8f5; stroke-width: 2; }
.ferry { stroke: #c3a7e0; stroke-width: 2; stroke-dasharray: 10 6; }
.lagoon { stroke: #9adcff; stroke-width: 12; }
.river { stroke: #9adcff; stroke-width: 16; }
.river-sm { stroke: #9adcff; stroke-width: 11; }
.river-md { stroke: #9adcff; stroke-width: 30; }
.river-lg { stroke: #9adcff; stroke-width: 22; }
.road-w path, .road-y path, .road-o path, .road-ot path {
    fill: none;
    stroke-linejoin: round;
    stroke-linecap: round;
}
.road-w path { stroke: #fff; stroke-width: 9; }
.road-w .thin { stroke-width: 5; }
.road-y path { stroke: #f9dc6e; stroke-width: 13; }
.road-o path { stroke: #fcab5c; stroke-width: 15; }
.road-ot path { stroke: #fcab5c; stroke-width: 4; }
.pin-body { fill: #3fb1ce; stroke: #3a97b0; stroke-width: 1; }
.poi-slate { fill: #7d92aa; }
.shield { fill: #4a5fd0; stroke: #fff; stroke-width: 3; }
.shield-g { fill: #16a34a; stroke: #fff; stroke-width: 3; }
.shield-t {
    font-family: Roboto, sans-serif;
    font-size: 36px;
    font-weight: 700;
    fill: #fff;
    text-anchor: middle;
}
.lbl {
    font-family: Roboto, "Noto Sans CJK JP", sans-serif;
    font-size: 48px;
    paint-order: stroke;
    stroke: rgba(255, 255, 255, .45);
    stroke-width: 3px;
}
.cjk { font-family: "Noto Sans CJK JP", sans-serif; font-size: 46px; }
.spaced { font-size: 42px; }
.slate { fill: #69809c; }
.brown { fill: #ad7e50; }
.teal { fill: #3fb8cc; }
.green { fill: #3b8f2e; }
.pink { fill: #ee66bb; }
.water-t { fill: #58aedb; font-style: italic; }
.road-t { fill: #444; font-size: 44px; }
.place { fill: #000; font-size: 54px; font-weight: 500; }
.mb-ring { fill: none; stroke: #aaa; stroke-width: 9; }
.mb-inner { fill: #aaa; }
.mb-text {
    font-family: Roboto, sans-serif;
    font-size: 68px;
    font-weight: 700;
    fill: #a8a8a8;
    stroke: #fff;
    stroke-width: 3px;
    paint-order: stroke;
}

/* Map controls */
.map-ctrl {
    position: absolute;
    top: 14px;
    right: 14px;
    width: 39px;
    display: flex;
    flex-direction: column;
    border-radius: 6px;
    background-color: #fff;
    box-shadow: 0 0 0 2.7px rgba(0, 0, 0, .1);
}
.ctrl-btn {
    display: flex;
    align-items: center;
    justify-content: center;
    padding: 0;
    border: none;
    background: none;
}
.ctrl-in {
    height: 93px;
}
.ctrl-out {
    height: 66px;
    align-items: flex-start;
    padding-top: 11px;
    border-top: 1px solid #ddd;
    border-radius: 6px 6px 0 0;
}
.ctrl-compass {
    height: 39px;
    border-top: 1px solid #ddd;
}
.ctrl-stroke {
    fill: none;
    stroke: #333;
    stroke-width: 4;
    stroke-linecap: round;
}
.map-attrib {
    position: absolute;
    right: 0;
    bottom: 0;
    height: 27px;
    padding: 0 7px;
    display: flex;
    gap: 8px;
    align-items: center;
    background-color: rgba(255, 255, 255, .5);
    color: #555;
    font-family: "Liberation Sans", Arial, sans-serif;
    font-size: 16.2px;
}

/* Search */
.search-form {
    display: flex;
    gap: 33px;
}
.search-input {
    flex: 1;
    height: 53px;
    padding: 0 10px;
    border: 1px solid #c5c5c5;
    border-radius: 5px;
    background-color: #fff;
    font-family: inherit;
    font-size: 18px;
}
.search-input::placeholder {
    color: #757575;
}
.search-btn {
    width: 106px;
    height: 53px;
    border: none;
    border-radius: 8px;
    background-color: #b71c1c;
    color: #fff;
    font-family: inherit;
    font-size: 16px;
    font-weight: 700;
}
.search-hint {
    margin: 12px 0 0;
    line-height: 22px;
    color: #a0a0a0;
    font-size: 14.7px;
    font-weight: 300;
}
```
